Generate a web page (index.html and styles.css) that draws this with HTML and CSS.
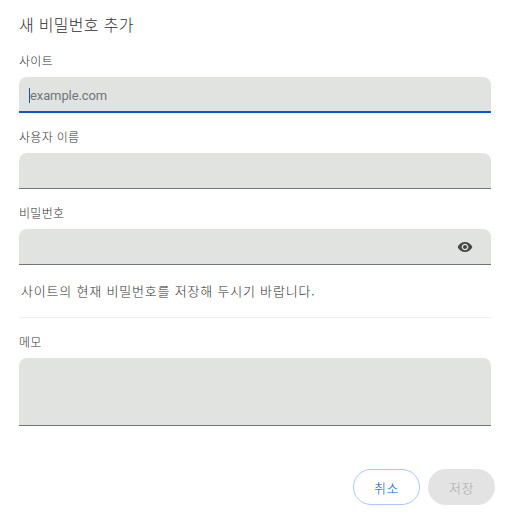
FILE: index.html
```html
<!DOCTYPE html>
<html lang="ko">
<head>
    <meta charset="UTF-8">
    <title>새 비밀번호 추가</title>
    <link rel="stylesheet" href="styles.css">
</head>
<body>
    <div class="dialog">
        <h1 class="title">새 비밀번호 추가</h1>

        <label class="field-label">사이트</label>
        <div class="input input-focus">
            <span class="caret"></span>
            <span class="placeholder">example.com</span>
        </div>

        <label class="field-label">사용자 이름</label>
        <div class="input"></div>

        <label class="field-label">비밀번호</label>
        <div class="input input-password">
            <svg class="eye" viewBox="0 0 24 24" width="20" height="20">
                <path d="M12 4.500C7 4.500 2.700 7.600 1 12c1.700 4.400 6 7.500 11 7.500s9.300-3.100 11-7.500c-1.700-4.400-6-7.500-11-7.500zM12 17c-2.800 0-5-2.200-5-5s2.200-5 5-5 5 2.200 5 5-2.200 5-5 5zm0-8c-1.700 0-3 1.300-3 3s1.300 3 3 3 3-1.300 3-3-1.300-3-3-3z"/>
            </svg>
        </div>

        <p class="note">사이트의 현재 비밀번호를 저장해 두시기 바랍니다.</p>
        <div class="divider"></div>

        <label class="field-label">메모</label>
        <div class="input input-memo"></div>

        <div class="buttons">
            <button class="btn btn-cancel">취소</button>
            <button class="btn btn-save">저장</button>
        </div>
    </div>
</body>
</html>
```

FILE: styles.css
```css
* {
    margin: 0;
    padding: 0;
    box-sizing: border-box;
    font-family: "Noto Sans CJK KR", "Noto Sans", sans-serif;
}

body {
    background-color: #fff;
    width: 510px;
    height: 519px;
    overflow: hidden;
}

.dialog {
    padding: 13px 15px 0 19px;
    display: flex;
    flex-direction: column;
}

.title {
    font-size: 16px;
    font-weight: 300;
    line-height: 22px;
    letter-spacing: 0.3px;
    color: #303030;
    margin-bottom: 17px;
}

.field-label {
    display: block;
    font-size: 12px;
    font-weight: 300;
    line-height: 18px;
    height: 16px;
    letter-spacing: 0.3px;
    color: #303030;
    margin-bottom: 9px;
}

.input {
    display: flex;
    align-items: center;
    width: 472px;
    height: 36px;
    background: #e1e3e1;
    border-radius: 8px 8px 0 0;
    border-bottom: 1px solid #70757a;
    margin-bottom: 15px;
}

.input-focus {
    border-bottom: 2px solid #0b57d0;
    padding: 2px 0 0 10px;
}

.caret {
    width: 1px;
    height: 15px;
    background: #0b57d0;
}

.placeholder {
    font-family: Roboto, sans-serif;
    font-size: 13px;
    letter-spacing: -0.1px;
    color: #70757a;
}

.input-password {
    justify-content: flex-end;
    padding-right: 18px;
    margin-bottom: 0;
}

.eye {
    fill: #474747;
    width: 16px;
    height: 16px;
}

.note {
    font-size: 13px;
    font-weight: 300;
    line-height: 18px;
    letter-spacing: 0.8px;
    color: #303030;
    margin: 17px 0 17px 2px;
}

.divider {
    width: 472px;
    height: 1px;
    background: #f0f0f0;
    margin-bottom: 15px;
}

.input-memo {
    height: 68px;
    margin-bottom: 0;
}

.buttons {
    display: flex;
    justify-content: flex-end;
    gap: 8px;
    margin-top: 43px;
}

.btn {
    width: 67px;
    height: 36px;
    border-radius: 18px;
    font-size: 13px;
    font-weight: 300;
    letter-spacing: 0.5px;
    background: #fff;
}

.btn-cancel {
    border: 1px solid #a8c7fa;
    color: #0b57d0;
}

.btn-save {
    border: none;
    background: #e3e3e3;
    color: #a8a8a8;
}
```
